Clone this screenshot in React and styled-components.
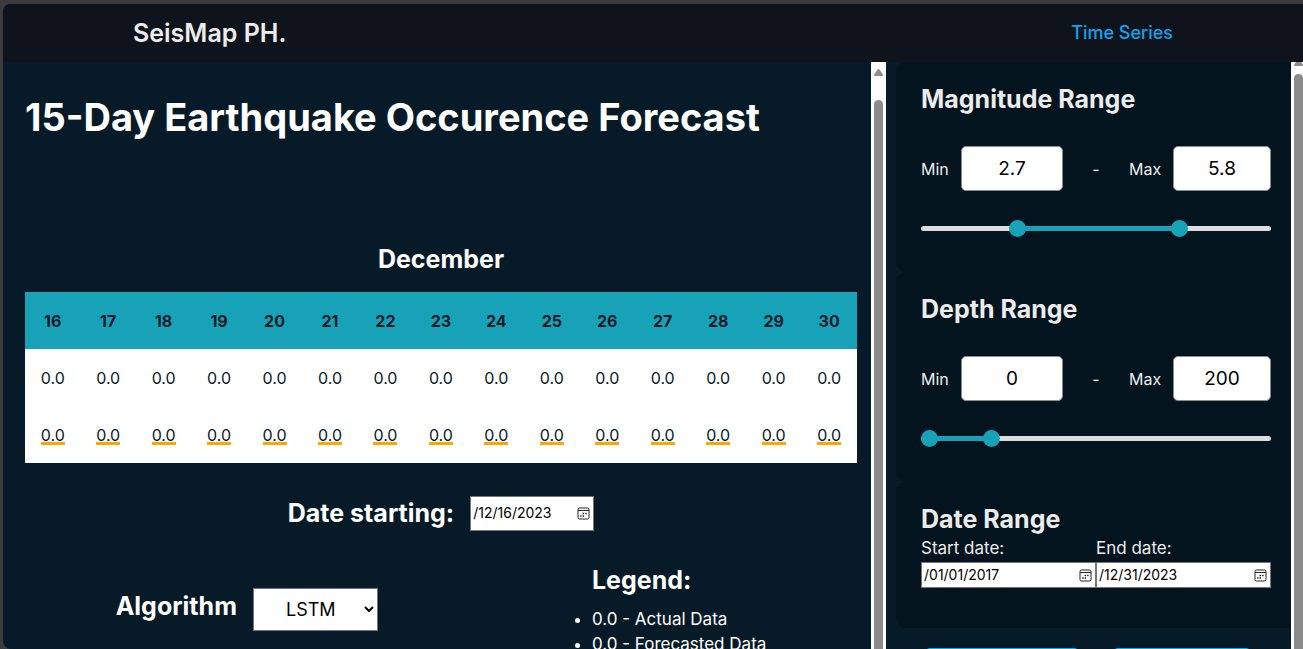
import React, { useId, useState } from "react";
import styled, { createGlobalStyle } from "styled-components";

const GlobalStyle = createGlobalStyle`
  *, *::before, *::after { box-sizing: border-box; }
  body {
    margin: 0;
    background: #3b3b3b;
    color: #fff;
    font-family: Inter, "Liberation Sans", sans-serif;
    font-size: 16px;
    line-height: 24px;
  }
  input, select, button { font-family: inherit; color: #000; margin: 0; }
`;

const Window = styled.div`
  height: 100vh;
  padding: 4px 0 0 3px;
  overflow: hidden;
`;

const Shell = styled.div`
  display: flex;
  flex-direction: column;
  height: 100%;
  overflow: hidden;
  border-radius: 8px 0 0 8px;
  background: #071a27;
`;

const Header = styled.header`
  display: flex;
  flex: none;
  align-items: center;
  justify-content: space-between;
  height: 58px;
  padding: 0 10% 0 10%;
  background: #0f131c;
`;

const Brand = styled.div`
  color: #ececec;
  font-size: 25px;
  font-weight: 600;
  line-height: 36px;
`;

const NavLink = styled.a`
  color: #0ea5f0;
  font-size: 18px;
  font-weight: 500;
  text-decoration: none;
`;

const Body = styled.div`
  display: flex;
  flex: 1;
  min-height: 0;
`;

const Pane = styled.main`
  flex: 1;
  min-width: 0;
  overflow: hidden;
  padding: 26px 14px 0 22px;
`;

const Scrollbar = styled.div`
  flex: none;
  display: flex;
  flex-direction: column;
  align-items: center;
  width: ${(p) => (p.$clipped ? 12 : 15)}px;
  padding-left: ${(p) => (p.$clipped ? 3 : 0)}px;
  overflow: hidden;
  background: #fcfcfc;
`;

const ScrollArrow = styled.svg`
  flex: none;
  display: block;
  width: 9px;
  height: 7px;
  margin: ${(p) => (p.$clipped ? "-3px 0 8px" : "7px 0 24px")};
`;

const ScrollThumb = styled.div`
  flex: 1;
  width: 9px;
  border-radius: 5px 5px 0 0;
  background: #8b8b8b;
`;

const Title = styled.h1`
  margin: 0 0 95px;
  font-size: 38px;
  font-weight: 700;
  line-height: 58px;
  white-space: nowrap;
`;

const Heading = styled.h2`
  margin: 0;
  color: ${(p) => (p.$muted ? "#ececec" : "#fff")};
  font-size: 25px;
  font-weight: 700;
  line-height: 36px;
`;

const Month = styled(Heading)`
  margin-bottom: 15px;
  text-align: center;
`;

const ForecastTable = styled.table`
  width: 100%;
  table-layout: fixed;
  border-collapse: collapse;
  background: #fff;
  color: #071a27;
  text-align: center;
  th, td { height: 57px; padding: 0; }
  th { background: #18a2b8; font-weight: 700; }
`;

const Forecasted = styled.span`
  display: inline-block;
  line-height: 14px;
  border-bottom: 3px solid orange;
`;

const StartRow = styled.div`
  display: flex;
  align-items: center;
  justify-content: center;
  gap: 16px;
  margin-top: 32px;
`;

const Bottom = styled.div`
  display: flex;
  justify-content: center;
  gap: 174px;
  margin-top: 31px;
`;

const Algorithm = styled.div`
  display: flex;
  align-items: flex-start;
  gap: 16px;
  height: 43px;
  margin-top: 26px;
`;

const AlgorithmSelect = styled.select`
  width: 125px;
  height: 43px;
  padding-left: 28px;
  border: 1px solid #767676;
  border-radius: 0;
  background-color: #fff;
  font-size: 18px;
`;

const LegendList = styled.ul`
  margin: 0;
  padding: 0;
  font-size: 17px;
  line-height: 25px;
`;

const Legend = styled.section`
  padding-left: 40px;
  ${Heading} { margin-bottom: 9px; }
`;

const DateBox = styled.div`
  display: flex;
  align-items: center;
  min-width: 0;
  width: ${(p) => p.$width};
  height: ${(p) => p.$height}px;
  padding-right: 3px;
  border: 1px solid #767676;
  background: #fff;
`;

const DateInput = styled.input`
  flex: 1;
  min-width: 0;
  padding: 0 0 0 2px;
  border: 0;
  background: none;
  font-size: 14px;
  line-height: 20px;
`;

const IconButton = styled.button`
  flex: none;
  display: block;
  width: 13px;
  height: 13px;
  padding: 0;
  border: 0;
  background: none;
  svg { display: block; }
`;

const Sidebar = styled.aside`
  flex: none;
  width: 405px;
  padding-left: 10px;
  overflow: hidden;
`;

const Card = styled.section`
  height: ${(p) => p.$height}px;
  margin-bottom: ${(p) => p.$gap}px;
  padding: 19px 20px 0 25px;
  border-radius: 10px 0 0 10px;
  background: #04141f;
`;

const Fields = styled.div`
  display: grid;
  grid-template-columns: 40px 102fr 66px 44px 98fr;
  align-items: center;
  margin-top: 29px;
  color: #ececec;
`;

const Dash = styled.span`
  text-align: center;
`;

const NumberInput = styled.input`
  width: 100%;
  height: 45px;
  padding: 0;
  border: 1px solid #8c8c8c;
  border-radius: 5px;
  background: #fff;
  font-size: 19px;
  text-align: center;
`;

const SliderBox = styled.div`
  position: relative;
  display: flex;
  align-items: center;
  height: 17px;
  margin-top: 29px;
`;

const Track = styled.div`
  width: 100%;
  height: 5px;
  padding: 0 8px;
  border-radius: 3px;
  background: #ddd;
`;

const Fill = styled.div`
  height: 5px;
  background: #18a2b8;
`;

const RangeInput = styled.input`
  position: absolute;
  inset: 0;
  width: 100%;
  height: 17px;
  appearance: none;
  background: none;
  pointer-events: none;
  &::-webkit-slider-thumb {
    appearance: none;
    width: 17px;
    height: 17px;
    border: 0;
    border-radius: 50%;
    background: #18a2b8;
    pointer-events: auto;
  }
`;

const Dates = styled.div`
  display: grid;
  grid-template-columns: 1fr 1fr;
  color: #ececec;
`;

const DateField = styled.div`
  min-width: 0;
  label {
    display: block;
    margin-bottom: 2px;
    font-size: 17px;
    line-height: 23px;
  }
`;

const Actions = styled.div`
  display: flex;
  gap: 34px;
  padding: 0 40px 0 29px;
`;

const ActionButton = styled.button`
  flex: ${(p) => p.$grow} 1 0;
  height: 45px;
  border: 0;
  border-radius: 5px;
  background: #0ea5f0;
`;

const days = Array.from({ length: 15 }, (_, i) => 16 + i);

function Scroll({ clipped }) {
  return (
    <Scrollbar $clipped={clipped} aria-hidden="true">
      <ScrollArrow $clipped={clipped} viewBox="0 0 9 7">
        <path d="M4.5 0 Q5 0 5.4 .6 L8.8 5.6 Q9.2 7 8 7 H1 Q-.2 7 .2 5.6 L3.6 .6 Q4 0 4.5 0Z" fill="#8b8b8b" />
      </ScrollArrow>
      <ScrollThumb />
    </Scrollbar>
  );
}

function DatePicker({ id, value, width, height, label }) {
  return (
    <DateBox $width={width} $height={height}>
      <DateInput id={id} defaultValue={value} />
      <IconButton type="button" aria-label={label}>
        <svg width="13" height="13" viewBox="0 0 13 13" fill="none" stroke="#222">
          <rect x="1" y="1" width="11" height="11" rx="1.5" />
          <path d="M1 3.5h11" />
          <path d="M5.6 6.5h1.4M8.2 6.5h1.4M3.2 9h1.4M5.6 9h1.4" strokeWidth="1.3" />
        </svg>
      </IconButton>
    </DateBox>
  );
}

function RangeCard({ title, low, high, min, max, step }) {
  const [lo, setLo] = useState(low);
  const [hi, setHi] = useState(high);
  const id = useId();
  const pct = (v) => ((v - min) / (max - min)) * 100;
  return (
    <Card $height={210} $gap={0}>
      <Heading $muted>{title}</Heading>
      <Fields>
        <label htmlFor={id + "lo"}>Min</label>
        <NumberInput id={id + "lo"} value={lo} onChange={(e) => setLo(e.target.value)} />
        <Dash>-</Dash>
        <label htmlFor={id + "hi"}>Max</label>
        <NumberInput id={id + "hi"} value={hi} onChange={(e) => setHi(e.target.value)} />
      </Fields>
      <SliderBox>
        <Track>
          <Fill style={{ marginLeft: `${pct(lo)}%`, width: `${pct(hi) - pct(lo)}%` }} />
        </Track>
        <RangeInput type="range" aria-label={`${title} minimum`} min={min} max={max} step={step}
          value={lo} onChange={(e) => setLo(e.target.value)} />
        <RangeInput type="range" aria-label={`${title} maximum`} min={min} max={max} step={step}
          value={hi} onChange={(e) => setHi(e.target.value)} />
      </SliderBox>
    </Card>
  );
}

export default function App() {
  return (
    <Window>
      <GlobalStyle />
      <Shell>
        <Header>
          <Brand>SeisMap PH.</Brand>
          <nav><NavLink href="#time-series">Time Series</NavLink></nav>
        </Header>
        <Body>
          <Pane>
            <Title>15-Day Earthquake Occurence Forecast</Title>
            <Month>December</Month>
            <ForecastTable>
              <thead>
                <tr>{days.map((d) => <th key={d} scope="col">{d}</th>)}</tr>
              </thead>
              <tbody>
                <tr>{days.map((d) => <td key={d}>0.0</td>)}</tr>
                <tr>{days.map((d) => <td key={d}><Forecasted>0.0</Forecasted></td>)}</tr>
              </tbody>
            </ForecastTable>
            <StartRow>
              <Heading as="label" htmlFor="starting">Date starting:</Heading>
              <DatePicker id="starting" value="/12/16/2023" width="124px" height={35} label="Pick starting date" />
            </StartRow>
            <Bottom>
              <Algorithm>
                <Heading as="label" htmlFor="algorithm">Algorithm</Heading>
                <AlgorithmSelect id="algorithm" defaultValue="LSTM">
                  <option>LSTM</option>
                </AlgorithmSelect>
              </Algorithm>
              <Legend>
                <Heading>Legend:</Heading>
                <LegendList>
                  <li>0.0 - Actual Data</li>
                  <li>0.0 - Forecasted Data</li>
                </LegendList>
              </Legend>
            </Bottom>
          </Pane>
          <Scroll />
          <Sidebar>
            <RangeCard title="Magnitude Range" low={2.7} high={5.8} min={1} max={7.4} step={0.1} />
            <RangeCard title="Depth Range" low={0} high={200} min={0} max={1075} step={1} />
            <Card $height={146} $gap={20}>
              <Heading $muted>Date Range</Heading>
              <Dates>
                <DateField>
                  <label htmlFor="start">Start date:</label>
                  <DatePicker id="start" value="/01/01/2017" width="100%" height={26} label="Pick start date" />
                </DateField>
                <DateField>
                  <label htmlFor="end">End date:</label>
                  <DatePicker id="end" value="/12/31/2023" width="100%" height={26} label="Pick end date" />
                </DateField>
              </Dates>
            </Card>
            <Actions>
              <ActionButton type="button" $grow={9} aria-label="Apply filters" />
              <ActionButton type="button" $grow={8} aria-label="Reset filters" />
            </Actions>
          </Sidebar>
          <Scroll clipped />
        </Body>
      </Shell>
    </Window>
  );
}
